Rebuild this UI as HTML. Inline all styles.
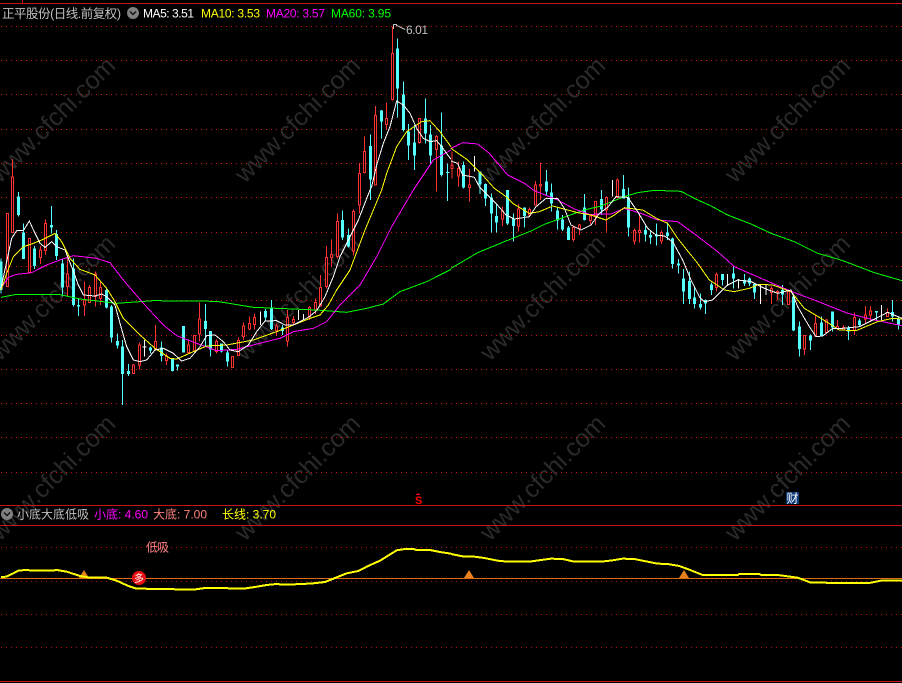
<!DOCTYPE html>
<html lang="zh"><head><meta charset="utf-8"><title>正平股份</title>
<style>
html,body{margin:0;padding:0;background:#000;width:902px;height:683px;overflow:hidden}
svg{display:block;position:absolute;left:0;top:0}
text{font-family:"Liberation Sans","Noto Sans CJK SC",sans-serif;font-size:12px}
.wm text{font-size:25px;fill:#2a2a2a}
.l{fill:none;stroke-width:3;shape-rendering:crispEdges}
.w{fill:none;stroke-width:3;shape-rendering:crispEdges}
.b{fill:none;stroke-width:9;shape-rendering:crispEdges}
.h{fill:#000;stroke:#ff3232;stroke-width:3;shape-rendering:crispEdges}
</style></head><body>
<svg width="902" height="683" viewBox="0 0 902 683" xmlns="http://www.w3.org/2000/svg">
<rect width="902" height="683" fill="#000"/>
<g class="wm">
<text transform="translate(0,184) rotate(-45)">www.cfchi.com</text>
<text transform="translate(245,184) rotate(-45)">www.cfchi.com</text>
<text transform="translate(490,184) rotate(-45)">www.cfchi.com</text>
<text transform="translate(735,184) rotate(-45)">www.cfchi.com</text>
<text transform="translate(0,362) rotate(-45)">www.cfchi.com</text>
<text transform="translate(245,362) rotate(-45)">www.cfchi.com</text>
<text transform="translate(490,362) rotate(-45)">www.cfchi.com</text>
<text transform="translate(735,362) rotate(-45)">www.cfchi.com</text>
<text transform="translate(0,542) rotate(-45)">www.cfchi.com</text>
<text transform="translate(245,542) rotate(-45)">www.cfchi.com</text>
<text transform="translate(490,542) rotate(-45)">www.cfchi.com</text>
<text transform="translate(735,542) rotate(-45)">www.cfchi.com</text>
</g>
<g fill="none" shape-rendering="crispEdges">
<path stroke="#cc1414" stroke-width="1" stroke-dasharray="1 4" d="M1 26.5H902M1 60.5H902M1 94.5H902M1 129.5H902M1 163.5H902M1 197.5H902M1 232.5H902M1 266.5H902M1 300.5H902M1 335.5H902M1 369.5H902M1 403.5H902M1 437.5H902M1 472.5H902"/>
<path stroke="#b01212" stroke-width="1" stroke-dasharray="1 4" d="M1 547.5H902M1 581.5H902M1 614.5H902M1 647.5H902"/>
<path stroke="#c81414" stroke-width="1" d="M0 3.5H902M22.5 0V3M0 505.5H902M0 525.5H902M0 681.5H902"/>
</g>

<!-- left section -->
<g transform="translate(0,190) scale(.33333)">
<path class="w" stroke="#ff3232" d="M22 70V290M37 -93V127M88 145V250M121 168V222M136 88V195M202 205V320M253 275V378M268 285V338M286 245V350M301 275V345M400 522V552M418 458V538M466 405V480M499 490V525M565 448V492M583 435V485M598 337V455M649 448V490M697 500V533M715 442V497M730 397V450M748 380V420M763 370V418M829 400V438M862 360V470M880 378V405M928 348V390M946 325V372M961 255V350M979 168V295M994 148V230M1012 70V205M1060 58V197M1078 -81V70"/>
<path class="h" d="M19 70h6V290h-6zM34 -39h6V127h-6zM85 145h6V247h-6zM118 180h6V202h-6zM133 100h6V182h-6zM199 252h6V290h-6zM250 330h6V345h-6zM265 292h6V338h-6zM283 252h6V320h-6zM298 292h6V325h-6zM397 525h6V550h-6zM415 465h6V525h-6zM463 455h6V478h-6zM496 498h6V512h-6zM562 465h6V488h-6zM580 437h6V484h-6zM595 387h6V432h-6zM646 455h6V485h-6zM694 500h6V533h-6zM712 452h6V497h-6zM727 408h6V440h-6zM745 400h6V417h-6zM760 382h6V403h-6zM826 408h6V422h-6zM859 382h6V453h-6zM877 388h6V398h-6zM925 352h6V380h-6zM943 337h6V360h-6zM958 292h6V348h-6zM976 203h6V290h-6zM991 193h6V203h-6zM1009 95h6V200h-6zM1057 65h6V183h-6zM1075 -50h6V45h-6z"/>
<path class="w" stroke="#54ffff" d="M3 205V310M55 6V80M70 100V207M103 168V237M154 48V130M169 120V210M187 205V320M220 205V350M235 325V378M319 295V355M334 345V458M352 430V475M367 450V645M385 522V558M451 470V490M484 455V515M517 505V545M532 523V542M550 408V488M616 342V470M631 423V500M664 460V487M682 478V530M796 357V392M814 330V420M847 405V435M1027 62V150M1045 115V172"/>
<path class="b" stroke="#54ffff" d="M3 215V300M55 20V75M70 127V207M103 175V228M154 105V113M169 132V198M187 220V292M220 235V345M235 345V350M319 300V352M334 350V443M352 453V466M367 470V552M385 543V552M451 472V482M484 472V498M517 507V543M532 523V530M550 408V487M616 393V417M631 423V478M664 460V485M682 487V515M796 363V382M814 353V417M847 413V423M1027 90V143M1045 135V170"/>
<path class="w" stroke="#fff" d="M433 450V500M781 365V405M895 360V390M910 372V390M427 471H439"/>
</g>

<!-- middle section -->
<g transform="scale(.33333)">
<path class="w" stroke="#ff3232" d="M1093 410V520M1126 318V555M1159 307V390M1177 80V302M1258 355V430M1309 405V575"/>
<path class="h" d="M1090 455h6V518h-6zM1123 347h6V555h-6zM1156 355h6V373h-6zM1174 160h6V298h-6zM1255 355h6V428h-6zM1306 410h6V448h-6z"/>
<path class="w" stroke="#54ffff" d="M1111 403V600M1144 330V415M1192 115V352M1210 245V395M1225 372V480M1243 375V510M1276 295V430M1291 375V495M1324 337V530M1342 490V603"/>
<path class="b" stroke="#54ffff" d="M1111 438V538M1144 331V365M1192 145V265M1210 283V390M1225 395V437M1243 427V467M1276 355V400M1291 403V467M1324 437V525"/>
<path class="w" stroke="#54ffff" d="M1338 517H1348"/>
</g>

<!-- right section -->
<g transform="translate(451,100) scale(.33333)">
<path class="w" stroke="#ff3232" d="M3 155V235M22 185V260M55 207V305M154 320V378M202 312V395M235 322V350M253 243V317M268 187V300M367 378V425M385 372V405M418 345V375M433 303V375M466 290V395M499 235V295M550 385V433M565 340V427M631 392V432M796 518V575M961 560V612M979 570V600M1012 568V615M1060 705V765M1093 643V708M1126 657V700M1159 660V690M1177 675V692M1210 637V705M1243 618V670M1258 618V665M1309 625V650"/>
<path class="h" d="M0 195h6V205h-6zM19 205h6V228h-6zM52 255h6V262h-6zM151 333h6V357h-6zM199 327h6V378h-6zM232 328h6V345h-6zM250 255h6V315h-6zM265 253h6V258h-6zM364 383h6V418h-6zM382 375h6V385h-6zM415 348h6V362h-6zM430 305h6V347h-6zM463 293h6V330h-6zM496 240h6V293h-6zM547 392h6V423h-6zM562 392h6V398h-6zM628 397h6V423h-6zM793 523h6V563h-6zM958 565h6V578h-6zM976 575h6V578h-6zM1009 575h6V613h-6zM1057 707h6V747h-6zM1090 670h6V708h-6zM1123 660h6V697h-6zM1156 680h6V686h-6zM1174 682h6V690h-6zM1207 652h6V692h-6zM1240 645h6V657h-6zM1255 633h6V645h-6zM1306 638h6V650h-6z"/>
<path class="w" stroke="#54ffff" d="M37 185V265M87 215V282M103 250V318M121 280V398M136 312V398M169 270V375M187 340V425M220 322V382M286 210V285M301 250V335M319 322V388M334 345V393M352 378V420M400 282V362M451 270V345M517 225V295M532 262V410M583 378V425M598 393V432M616 370V437M649 368V420M664 413V505M682 477V520M697 507V612M715 515V612M730 560V625M748 580V628M763 598V642M781 548V585M814 522V557M847 497V565M880 522V558M895 533V558M910 550V597M994 555V615M1027 580V693M1045 665V770M1078 703V750M1111 650V708M1144 635V695M1192 678V720M1225 655V680M1276 633V660M1324 600V665M1342 650V688"/>
<path class="b" stroke="#54ffff" d="M37 195V262M87 215V253M103 252V295M121 292V340M136 348V368M169 270V370M187 355V378M220 323V348M286 245V275M301 277V310M319 332V362M334 358V388M352 383V420M400 323V360M451 297V328M517 267V295M532 292V383M583 390V403M598 405V413M616 405V410M649 398V408M664 415V492M682 490V497M697 535V575M715 543V597M730 592V612M748 612V622M763 600V610M781 553V570M814 522V540M847 520V535M880 540V550M895 535V550M910 552V578M994 570V583M1027 590V692M1045 680V747M1078 706V722M1111 668V706M1144 635V682M1192 683V695M1225 662V675M1276 633V637M1324 636V650M1342 655V673"/>
<path class="w" stroke="#fff" d="M70 168V215M484 240V290M829 522V558M862 537V565M928 555V612M945 552V585M1291 615V660"/>
</g>

<!-- moving averages -->
<g transform="translate(0,190) scale(.33333)">
<polyline class="l" stroke="#00ff00" points="3,322 50,313 180,314 240,327 350,340 460,332 650,334 760,352 950,360 1040,367 1100,355 1150,342 1200,305 1280,275 1353,238"/>
<polyline class="l" stroke="#ff00ff" points="3,295 25,262 50,253 95,248 140,225 185,208 220,197 290,205 330,218 370,270 430,340 490,405 530,437 590,460 650,482 710,478 790,457 840,445 880,425 940,415 980,395 1020,345 1080,285 1130,200 1175,110 1240,0"/>
<polyline class="l" stroke="#ffff00" points="3,300 20,250 40,200 70,170 95,162 125,150 165,130 185,155 210,205 240,238 285,255 320,295 345,335 370,385 420,435 465,475 510,505 530,507 580,485 620,468 680,465 760,450 830,425 880,405 930,385 960,375 985,345 1010,300 1050,240 1095,120 1145,0"/>
<polyline class="l" stroke="#ffffff" points="3,295 20,215 35,145 50,122 70,122 88,93 105,130 120,160 135,172 155,155 170,170 195,180 215,230 235,285 250,315 285,318 305,312 320,320 345,345 360,400 380,470 400,510 420,515 440,510 465,480 490,475 520,490 545,513 570,505 600,470 620,437 645,435 670,455 690,480 715,485 745,465 770,425 795,393 830,392 855,405 880,405 925,382 950,362 975,320 1000,260 1020,200 1050,140 1075,90 1110,0"/>
</g>
<g transform="scale(.33333)">
<polyline class="l" stroke="#ff00ff" points="1240,570 1260,540 1300,480 1353,450"/>
<polyline class="l" stroke="#ffff00" points="1145,570 1160,520 1190,440 1220,395 1265,365 1290,362 1320,395 1353,440"/>
<polyline class="l" stroke="#ffffff" points="1110,570 1115,560 1130,495 1150,430 1170,380 1190,303 1210,315 1230,340 1250,385 1270,415 1290,425 1310,422 1325,440 1353,478"/>
</g>
<g transform="translate(451,100) scale(.33333)">
<polyline class="l" stroke="#00ff00" points="0,505 80,458 160,425 240,393 280,373 330,355 400,330 450,318 520,290 560,278 610,271 690,274 730,295 780,318 830,345 900,372 960,400 1030,425 1100,460 1170,480 1270,518 1353,542"/>
<polyline class="l" stroke="#ff00ff" points="0,145 35,128 80,132 115,160 170,225 220,250 250,272 320,300 370,327 415,343 480,342 520,325 570,340 620,360 680,365 735,405 800,455 850,500 930,535 1030,578 1090,600 1190,640 1270,660 1353,677"/>
<polyline class="l" stroke="#ffff00" points="0,145 50,180 90,220 130,265 165,290 185,310 235,340 265,335 305,318 380,338 420,345 465,360 490,345 520,323 575,330 620,357 650,370 680,415 740,490 775,540 820,570 850,575 895,565 925,553 965,555 1020,575 1060,625 1110,655 1165,690 1215,692 1280,665 1325,655 1353,657"/>
<polyline class="l" stroke="#ffffff" points="0,183 20,190 35,225 70,232 85,260 110,285 135,310 165,345 190,357 235,350 255,320 285,295 320,295 340,325 360,375 390,390 420,375 445,340 470,322 495,290 530,292 560,335 590,385 615,405 640,408 665,425 695,480 720,540 745,590 760,605 785,600 830,555 860,540 900,545 940,565 980,580 1020,570 1040,620 1075,680 1095,710 1115,708 1145,685 1175,685 1225,680 1275,655 1310,637 1353,655"/>
</g>

<!-- high marker -->
<path d="M393.5 29V24.5H397M396 25L405 29.5" fill="none" stroke="#c0c0c0" stroke-width="1"/>
<text x="406" y="34" fill="#c0c0c0" textLength="22">6.01</text>

<!-- header -->
<text x="2" y="18" fill="#c0c0c0" textLength="119" style="font-size:12.5px">正平股份(日线.前复权)</text>
<circle cx="133" cy="13" r="6" fill="#808080"/>
<path d="M130 11.5l3 3 3-3" fill="none" stroke="#111" stroke-width="1.4"/>
<text x="143" y="17.5" fill="#ffffff" textLength="51">MA5: 3.51</text>
<text x="201" y="17.5" fill="#ffff00" textLength="59">MA10: 3.53</text>
<text x="266" y="17.5" fill="#ff00ff" textLength="59">MA20: 3.57</text>
<text x="331" y="17.5" fill="#00ff00" textLength="60">MA60: 3.95</text>

<!-- S and 财 markers -->
<path d="M416 494.5h4M417.5 493.5h1" stroke="#ff0000" stroke-width="1" shape-rendering="crispEdges"/>
<text x="415" y="504" fill="#ff0000" style="font-size:11px;font-weight:bold">S</text>
<rect x="786" y="492" width="13" height="12" fill="#0f3a78"/>
<text x="786.5" y="502.5" fill="#fff" style="font-size:12px">财</text>

<!-- lower panel -->
<circle cx="7" cy="514" r="6" fill="#808080"/>
<path d="M4 512.5l3 3 3-3" fill="none" stroke="#111" stroke-width="1.4"/>
<text x="17" y="518.5" fill="#c0c0c0" textLength="72">小底大底低吸</text>
<text x="94" y="518.5" fill="#ff00ff" textLength="54">小底: 4.60</text>
<text x="153" y="518.5" fill="#ff8080" textLength="54">大底: 7.00</text>
<text x="222" y="518.5" fill="#ffff00" textLength="54">长线: 3.70</text>
<text x="146" y="551.5" fill="#ff8080" textLength="23">低吸</text>

<path d="M0 578.5H902" stroke="#e06a10" stroke-width="1" shape-rendering="crispEdges"/>
<g fill="#e8801c">
<path d="M84 570l5 8h-10z"/>
<path d="M469 570l5 8h-10z"/>
<path d="M684 570l5 8h-10z"/>
</g>
<g transform="translate(0,490) scale(.33333)">
<polyline fill="none" stroke="#ffff00" stroke-width="6" shape-rendering="crispEdges" points="3,261 20,260 40,250 55,242 75,240 105,242 155,242 170,240 200,245 240,258 270,263 320,263 350,272 385,288 410,296 520,297 530,299 580,299 615,294 680,294 690,296 730,296 765,291 800,285 830,282 850,284 880,284 890,282 930,281 975,276 1010,262 1040,250 1075,243 1100,230 1140,212 1190,181 1215,177 1240,177 1250,180 1290,180 1320,186 1353,191"/>
</g>
<g transform="translate(451,480) scale(.33333)">
<polyline fill="none" stroke="#ffff00" stroke-width="6" shape-rendering="crispEdges" points="0,222 40,230 70,230 100,234 140,242 170,245 235,245 270,240 300,236 335,237 370,245 450,245 485,241 515,236 550,237 620,251 650,252 685,258 720,271 755,285 860,285 865,282 925,282 930,285 980,285 1040,293 1080,308 1255,309 1290,302 1353,302"/>
</g>
<circle cx="139" cy="578" r="7" fill="#e81010"/>
<text x="134" y="582" fill="#fff" style="font-size:10px">多</text>
</svg>
</body></html>
